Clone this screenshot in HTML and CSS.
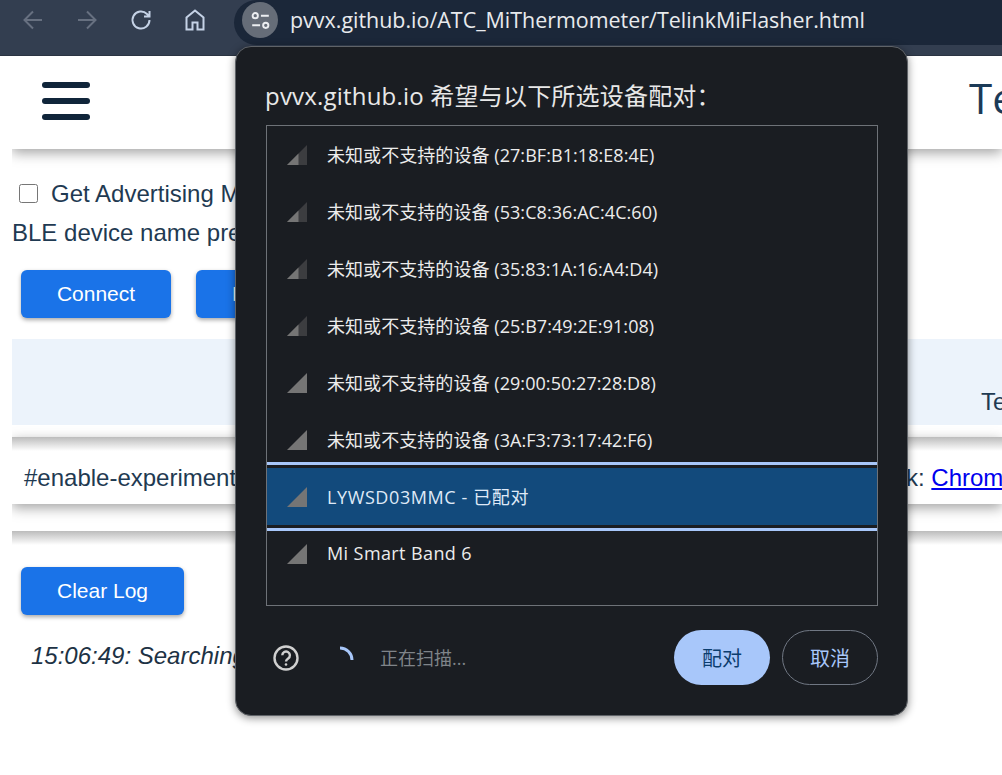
FILE: index.html
```html
<!DOCTYPE html>
<html lang="en">
<head>
<meta charset="utf-8">
<title>TelinkMiFlasher</title>
<link rel="stylesheet" href="styles.css">
</head>
<body>
<div class="toolbar">
  <div class="nav">
    <svg class="nav-icon" viewBox="-2 0 28 24"><path class="st dim" d="M21 12H3.500M12 3.500 3.500 12l8.500 8.500"/></svg>
    <svg class="nav-icon" viewBox="-2 0 28 24"><path class="st dim" d="M3 12h17.500M12 3.500l8.500 8.500-8.500 8.500"/></svg>
    <svg class="nav-icon" viewBox="-2 0 28 24"><path class="st lit" d="M20.500 12a8.500 8.500 0 1 1-2.500-6L20.500 8.500M20.500 3v5.500H15"/></svg>
    <svg class="nav-icon" viewBox="-2 0 28 24"><path class="st lit" d="M3.500 21.500V9.500L12 2.500l8.500 7v12h-6v-7h-5v7z"/></svg>
  </div>
  <div class="omnibox">
    <span class="chip"><svg class="chip-icon" viewBox="0 0 24 24"><circle class="st white" cx="6" cy="6.500" r="3"/><path class="st white" d="M12.500 6.500h9M2.500 17.500h9"/><circle class="st white" cx="18" cy="17.500" r="3"/></svg></span>
    <span class="url">pvvx.github.io/ATC_MiThermometer/TelinkMiFlasher.html</span>
  </div>
</div>

<div class="page">
  <header class="app-bar">
    <div class="burger"><i></i><i></i><i></i></div>
    <h1 class="app-title">TelinkMiFlasher</h1>
  </header>
  <section class="controls">
    <label class="check-row"><input type="checkbox"><span>Get Advertising MAC</span></label>
    <div class="name-row">BLE device name prefix</div>
    <div class="btn-row">
      <button class="btn btn-connect">Connect</button>
      <button class="btn">Disconnect</button>
    </div>
  </section>
  <section class="notice"><span>Te</span></section>
  <section class="flag-row">
    <span>#enable-experimental-web-platform-features</span>
    <span class="flag-link">k: <a href="#">Chrome</a></span>
  </section>
  <div class="rule"></div>
  <section class="log">
    <button class="btn btn-clear">Clear Log</button>
    <p class="log-line">15:06:49: Searching for devices</p>
  </section>
</div>

<div class="dialog">
  <h2 class="dialog-title">pvvx.github.io 希望与以下所选设备配对：</h2>
  <ul class="devices">
    <li class="device"><svg class="signal" viewBox="0 0 20 20"><path class="sig-off" d="M20 0v20H0z"/><path class="sig-on" d="M11.500 8.500V20H0z"/></svg><span class="dev-name">未知或不支持的设备 (27:BF:B1:18:E8:4E)</span></li>
    <li class="device"><svg class="signal" viewBox="0 0 20 20"><path class="sig-off" d="M20 0v20H0z"/><path class="sig-on" d="M11.500 8.500V20H0z"/></svg><span class="dev-name">未知或不支持的设备 (53:C8:36:AC:4C:60)</span></li>
    <li class="device"><svg class="signal" viewBox="0 0 20 20"><path class="sig-off" d="M20 0v20H0z"/><path class="sig-on" d="M11.500 8.500V20H0z"/></svg><span class="dev-name">未知或不支持的设备 (35:83:1A:16:A4:D4)</span></li>
    <li class="device"><svg class="signal" viewBox="0 0 20 20"><path class="sig-off" d="M20 0v20H0z"/><path class="sig-on" d="M11.500 8.500V20H0z"/></svg><span class="dev-name">未知或不支持的设备 (25:B7:49:2E:91:08)</span></li>
    <li class="device"><svg class="signal" viewBox="0 0 20 20"><path class="sig-on" d="M20 0v20H0z"/></svg><span class="dev-name">未知或不支持的设备 (29:00:50:27:28:D8)</span></li>
    <li class="device"><svg class="signal" viewBox="0 0 20 20"><path class="sig-on" d="M20 0v20H0z"/></svg><span class="dev-name">未知或不支持的设备 (3A:F3:73:17:42:F6)</span></li>
    <li class="device selected"><svg class="signal" viewBox="0 0 20 20"><path class="sig-on" d="M20 0v20H0z"/></svg><span class="dev-name">LYWSD03MMC - 已配对</span></li>
    <li class="device named"><svg class="signal" viewBox="0 0 20 20"><path class="sig-on" d="M20 0v20H0z"/></svg><span class="dev-name">Mi Smart Band 6</span></li>
  </ul>
  <div class="dialog-foot">
    <svg class="help" viewBox="0 0 26 26"><circle cx="13" cy="13" r="11.500"/><path d="M9.300 10.300a3.800 3.800 0 1 1 5.900 3.200c-1.300.9-2.200 1.500-2.200 3"/><circle class="help-dot" cx="13" cy="19.500" r="1.300"/></svg>
    <svg class="spinner" viewBox="0 0 28 28"><path d="M14 2A12 12 0 0 1 26 14"/></svg>
    <span class="scan">正在扫描...</span>
    <button class="pill pill-main">配对</button>
    <button class="pill pill-ghost">取消</button>
  </div>
</div>
</body>
</html>
```
FILE: styles.css
```css
* { box-sizing: border-box; }
html, body { margin: 0; padding: 0; height: 775px; overflow: hidden; background: #fff; }
body { font-family: "Liberation Sans", Arial, sans-serif; color: #1f3a52; position: relative; }

.toolbar { height: 56px; background: #333e50; border-bottom: 1px solid #2b3442; display: flex; align-items: flex-start; }
.nav { width: 234px; flex: none; display: flex; gap: 26px; padding: 8px 0 0 19px; }
.nav-icon { width: 28px; height: 24px; flex: none; }
.st { fill: none; stroke-width: 2; }
.dim { stroke: #677080; }
.lit { stroke: #c5d2e6; }
.white { stroke: #eceef1; stroke-width: 2.200; }
.omnibox { flex: 1; min-width: 0; height: 45px; background: #1b2739; border-radius: 23px 0 0 23px; display: flex; align-items: flex-start; padding: 2px 0 0 8px; }
.chip { width: 36px; height: 36px; border-radius: 50%; background: #666d78; display: flex; align-items: center; justify-content: center; flex: none; }
.chip-icon { width: 21px; height: 21px; }
.url { font: 21.450px/36px "Open Sans", sans-serif; color: #e8eaed; margin-left: 12px; white-space: nowrap; }

.page { margin-left: 12px; height: 719px; overflow: hidden; }
.app-bar { height: 93px; display: flex; align-items: center; background: #fff; box-shadow: 0 4px 12px rgba(0,0,0,.36); position: relative; white-space: nowrap; }
.burger { margin: 0 0 3px 30px; width: 48px; flex: none; display: flex; flex-direction: column; gap: 10px; }
.burger i { display: block; height: 6px; border-radius: 3px; background: #10253a; }
.app-title { font: 400 42px "Open Sans", sans-serif; color: #1b3a57; margin: 0 0 10px 879px; flex: none; }

.controls { padding: 31px 0 0 0; height: 190px; font-size: 24px; }
.check-row { display: flex; align-items: center; gap: 13px; margin-left: 7px; height: 27px; white-space: nowrap; }
.check-row input { width: 19px; height: 19px; margin: 0; flex: none; }
.name-row { margin-top: 12px; height: 27px; line-height: 27px; white-space: nowrap; }
.btn-row { display: flex; gap: 25px; margin: 24px 0 0 9px; }
.btn { height: 48px; border: 0; border-radius: 6px; background: #1a73e8; color: #fff; font: 21px "Liberation Sans", Arial, sans-serif; padding: 0 36px; box-shadow: 0 2px 4px rgba(0,0,0,.35); white-space: nowrap; flex: none; }
.btn-connect { width: 150px; padding: 0; }

.notice { height: 86px; background: #ecf3fb; font-size: 24px; display: flex; align-items: flex-end; justify-content: flex-end; padding-bottom: 9px; white-space: nowrap; overflow: hidden; }
.notice span { width: 21px; overflow: visible; }

.flag-row { margin-top: 12px; height: 67px; padding: 14px 0 0 12px; background: linear-gradient(#bcbcbc, #fff 14px); font-size: 24px; display: flex; align-items: center; justify-content: space-between; box-shadow: 0 4px 12px rgba(0,0,0,.36); white-space: nowrap; overflow: hidden; }
.flag-link { width: 96px; flex: none; }
.flag-link a { color: #0000ee; }
.rule { margin-top: 27px; height: 14px; background: linear-gradient(#bcbcbc, #fff); }

.log { padding: 22px 0 0 9px; }
.btn-clear { width: 163px; padding: 0; display: block; }
.log-line { font-style: italic; font-size: 24px; line-height: 27px; margin: 27px 0 0 10px; color: #1d3244; white-space: nowrap; }

.dialog { position: absolute; left: 235px; top: 46px; width: 673px; height: 670px; background: #1a1d22; border: 1px solid #5f6368; border-radius: 16px; box-shadow: 0 2px 8px rgba(0,0,0,.45); font-family: "Open Sans", "Noto Sans CJK SC", sans-serif; color: #e8e8e8; padding: 31px 29px 0 30px; }
.dialog-title { font-size: 24px; letter-spacing: .2px; font-weight: 400; line-height: 36px; margin: 0 0 11px -1px; white-space: nowrap; }
.devices { list-style: none; margin: 0; padding: 0; height: 481px; border: 1px solid #6e7278; overflow: hidden; }
.device { height: 57px; display: flex; align-items: center; gap: 20px; padding-left: 20px; font-size: 18px; letter-spacing: .06px; color: #ececec; white-space: nowrap; }
.dev-name { margin-bottom: 2px; }
.named { letter-spacing: .4px; }
.signal { width: 20px; height: 20px; flex: none; }
.sig-on { fill: #757575; }
.sig-off { fill: #3c3d40; }
.selected { background: #124a7c; outline: 3px solid #a8c7fa; outline-offset: 3px; color: #dfe9f7; letter-spacing: .6px; position: relative; }
.dialog-foot { display: flex; align-items: center; margin-top: 24px; height: 55px; }
.help { width: 26px; height: 26px; margin-left: 7px; fill: none; stroke: #d0d0d0; stroke-width: 2.400; flex: none; }
.help-dot { fill: #d0d0d0; stroke: none; }
.spinner { width: 28px; height: 28px; margin: 4px 0 0 27px; flex: none; fill: none; stroke: #a8c7fa; stroke-width: 3; }
.scan { font-size: 18px; color: #7f8489; margin-left: 26px; flex: 1; padding-bottom: 2px; }
.pill { width: 96px; height: 55px; border-radius: 28px; font: 20px "Noto Sans CJK SC", sans-serif; flex: none; }
.pill-main { background: #a8c7fa; border: 0; color: #0b3d6e; }
.pill-ghost { background: transparent; border: 1px solid #707783; color: #a8c7fa; margin-left: 12px; }
```
